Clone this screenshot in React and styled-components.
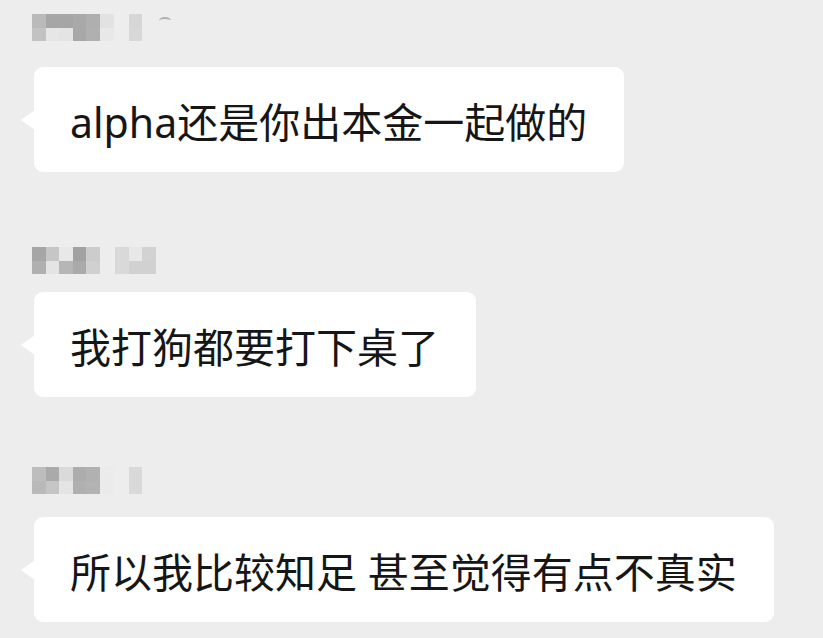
import React from "react";
import styled, { createGlobalStyle } from "styled-components";

const Global = createGlobalStyle`
  html, body { margin: 0; padding: 0; background: #ededed; }
  body { font-family: "Noto Sans", "Noto Sans CJK SC", sans-serif; }
`;

const Page = styled.div`
  width: 823px;
  height: 638px;
  background: #ededed;
  padding: 14px 0 0 32px;
  box-sizing: border-box;
  display: flex;
  flex-direction: column;
  overflow: hidden;
`;

const Message = styled.div`
  display: flex;
  flex-direction: column;
  align-items: flex-start;
  margin-top: ${(p) => p.$top || 0}px;
`;

const NameRow = styled.div`
  display: flex;
  align-items: flex-start;
  gap: ${(p) => p.$gap || 15}px;
  height: 27px;
  filter: blur(0.4px);
`;

const Mosaic = styled.div`
  display: grid;
  grid-template-columns: repeat(${(p) => p.$cols}, 13.6px);
  grid-auto-rows: 13.5px;
`;

const Cell = styled.div`
  background: ${(p) => p.$c};
`;

const Caret = styled.div`
  width: 12px;
  height: 5px;
  margin-top: 3px;
  margin-left: 2px;
  border-top: 2px solid #b0b0b0;
  border-radius: 50% 50% 0 0;
`;

const Bubble = styled.div`
  position: relative;
  margin-top: ${(p) => p.$gap}px;
  margin-left: 2px;
  height: 105px;
  padding: 0 37px 0 36px;
  box-sizing: border-box;
  background: #ffffff;
  border-radius: 9px;
  display: flex;
  align-items: center;
  font-size: 41px;
  color: #161616;
  white-space: pre;
  &::before {
    content: "";
    position: absolute;
    left: -13px;
    top: 50%;
    transform: translateY(-50%);
    border-right: 14px solid #ffffff;
    border-top: 10px solid transparent;
    border-bottom: 10px solid transparent;
  }
`;

const Name = ({ groups, caret }) => (
  <NameRow>
    {groups.map((rows, i) => (
      <Mosaic key={i} $cols={rows[0].length}>
        {rows.flat().map((c, j) => (
          <Cell key={j} $c={c} />
        ))}
      </Mosaic>
    ))}
    {caret && <Caret />}
  </NameRow>
);

const names = [
  {
    groups: [
      [
        ["#bababa", "#a6a6a6", "#a6a6a6", "#a9a9a9", "#afafaf", "#e2e2e2"],
        ["#c2c2c2", "#e6e6e6", "#e4e4e4", "#a8a8a8", "#b0b0b0", "#e8e8e8"],
      ],
      [["#d6d6d6"], ["#d8d8d8"]],
    ],
    caret: true,
  },
  {
    groups: [
      [
        ["#a6a6a6", "#c6c6c6", "#e8e8e8", "#a2a2a2", "#cccccc"],
        ["#b0b0b0", "#e4e4e4", "#b6b6b6", "#aaaaaa", "#d0d0d0"],
      ],
      [
        ["#d9d9d9", "#e8e8e8", "#d2d2d2"],
        ["#d9d9d9", "#d1d1d1", "#d1d1d1"],
      ],
    ],
  },
  {
    groups: [
      [
        ["#bdbdbd", "#aaaaaa", "#dadada", "#adadad", "#b1b1b1", "#ebebeb"],
        ["#b9b9b9", "#c5c5c5", "#e4e4e4", "#b0b0b0", "#b3b3b3", "#ebebeb"],
      ],
      [["#d9d9d9"], ["#d9d9d9"]],
    ],
  },
];

const messages = [
  { text: "alpha还是你出本金一起做的", top: 0, gap: 26 },
  { text: "我打狗都要打下桌了", top: 75, gap: 18 },
  { text: "所以我比较知足 甚至觉得有点不真实", top: 70, gap: 23 },
];

export default function App() {
  return (
    <>
      <Global />
      <Page>
        {messages.map((m, i) => (
          <Message key={i} $top={m.top}>
            <Name groups={names[i].groups} caret={names[i].caret} />
            <Bubble $gap={m.gap}>{m.text}</Bubble>
          </Message>
        ))}
      </Page>
    </>
  );
}
